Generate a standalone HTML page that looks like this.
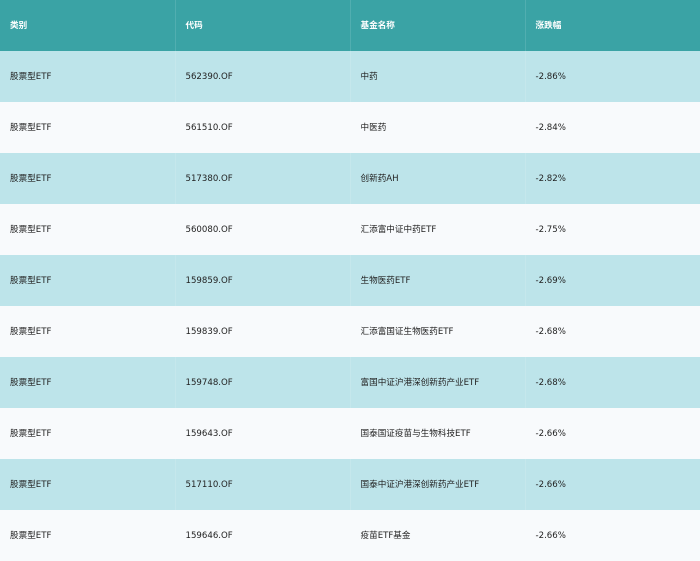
<!DOCTYPE html>
<html><head><style>
body{margin:0;width:700px;height:560px;overflow:hidden;font-family:"DejaVu Sans","Noto Sans CJK SC",sans-serif;color:#222}
table{border-collapse:collapse;width:700px;table-layout:fixed}
td,th{height:51px;padding:0 0 0 10px;text-align:left;border-right:1px solid rgba(255,255,255,.12);white-space:nowrap;font-size:8.6px;line-height:10px}
th{background:#3aa3a5;color:#fff;font-weight:bold;height:51px}
tr:nth-child(even) td{background:#bde4ea}
tr:nth-child(odd) td{background:#f8fafc}
td:last-child,th:last-child{border-right:none}
</style></head><body>
<table>
<colgroup><col style="width:175px"><col style="width:175px"><col style="width:175px"><col style="width:175px"></colgroup>
<tr><th>类别</th><th>代码</th><th>基金名称</th><th>涨跌幅</th></tr>
<tr><td>股票型ETF</td><td>562390.OF</td><td>中药</td><td>-2.86%</td></tr>
<tr><td>股票型ETF</td><td>561510.OF</td><td>中医药</td><td>-2.84%</td></tr>
<tr><td>股票型ETF</td><td>517380.OF</td><td>创新药AH</td><td>-2.82%</td></tr>
<tr><td>股票型ETF</td><td>560080.OF</td><td>汇添富中证中药ETF</td><td>-2.75%</td></tr>
<tr><td>股票型ETF</td><td>159859.OF</td><td>生物医药ETF</td><td>-2.69%</td></tr>
<tr><td>股票型ETF</td><td>159839.OF</td><td>汇添富国证生物医药ETF</td><td>-2.68%</td></tr>
<tr><td>股票型ETF</td><td>159748.OF</td><td>富国中证沪港深创新药产业ETF</td><td>-2.68%</td></tr>
<tr><td>股票型ETF</td><td>159643.OF</td><td>国泰国证疫苗与生物科技ETF</td><td>-2.66%</td></tr>
<tr><td>股票型ETF</td><td>517110.OF</td><td>国泰中证沪港深创新药产业ETF</td><td>-2.66%</td></tr>
<tr><td>股票型ETF</td><td>159646.OF</td><td>疫苗ETF基金</td><td>-2.66%</td></tr>
</table></body></html>
